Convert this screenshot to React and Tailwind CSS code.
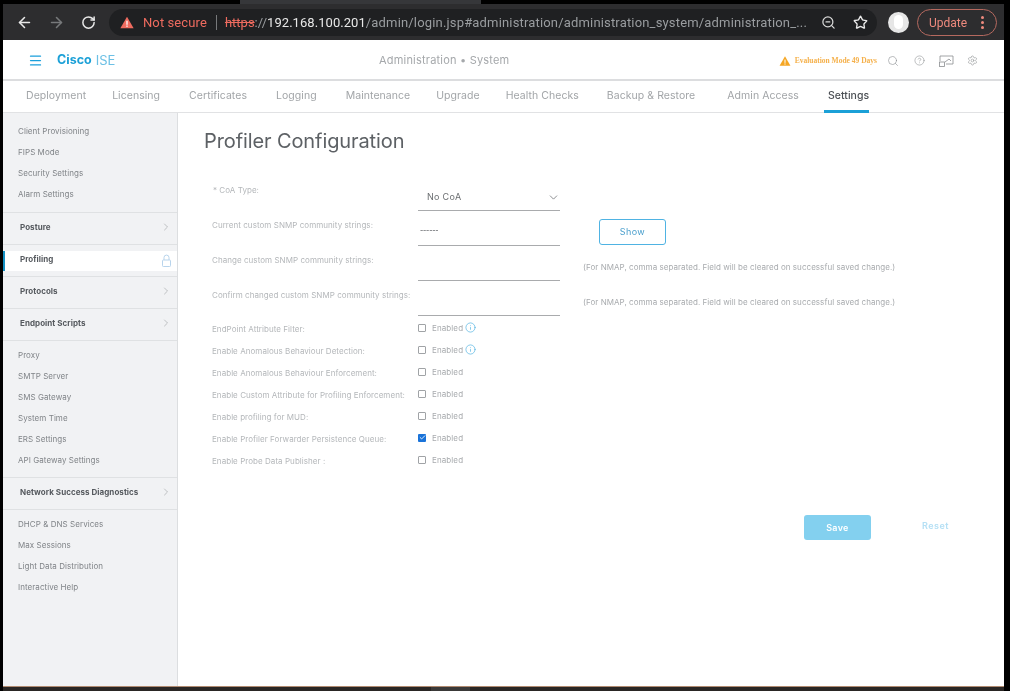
import React from 'react';
import { ArrowLeft, ArrowRight, RotateCw, Search, Star, ZoomOut, Menu, CircleHelp, Settings, ChevronRight, ChevronDown, Check, Info } from 'lucide-react';

const tabs = [
  { name: 'Deployment', gap: '' },
  { name: 'Licensing', gap: 'ml-[26px]' },
  { name: 'Certificates', gap: 'ml-[29px]' },
  { name: 'Logging', gap: 'ml-[29px]' },
  { name: 'Maintenance', gap: 'ml-[29px]' },
  { name: 'Upgrade', gap: 'ml-[26px]' },
  { name: 'Health Checks', gap: 'ml-[26px]' },
  { name: 'Backup & Restore', gap: 'ml-[28px]' },
  { name: 'Admin Access', gap: 'ml-[32px]' },
  { name: 'Settings', gap: 'ml-[25px] pl-[4px]' },
];

const checks = [
  { label: 'EndPoint Attribute Filter:', info: true },
  { label: 'Enable Anomalous Behaviour Detection:', info: true },
  { label: 'Enable Anomalous Behaviour Enforcement:' },
  { label: 'Enable Custom Attribute for Profiling Enforcement:' },
  { label: 'Enable profiling for MUD:' },
  { label: 'Enable Profiler Forwarder Persistence Queue:', checked: true },
  { label: 'Enable Probe Data Publisher :' },
];

const hint = '(For NMAP, comma separated. Field will be cleared on successful saved change.)';

const Warn = ({ className }) => (
  <svg viewBox="0 0 16 14" className={className}>
    <path d="M8 0.5 L15.6 13.5 H0.4 Z" fill="currentColor" />
    <rect x="7.2" y="5" width="1.6" height="4.6" fill="#fff" opacity="0.9" />
    <rect x="7.2" y="10.4" width="1.6" height="1.6" fill="#fff" opacity="0.9" />
  </svg>
);

const PadLock = () => (
  <svg viewBox="0 0 9 13" className="w-[9px] h-[13px] text-[#b8d4ec]" fill="none" stroke="currentColor" strokeWidth="1">
    <path d="M2 6 V3.6 a2.5 2.5 0 0 1 5 0 V6" />
    <rect x="0.5" y="6" width="8" height="6.5" rx="0.8" />
  </svg>
);

const Screens = () => (
  <svg viewBox="0 0 15 12" className="w-[15px] h-[12px] text-[#8a8d90]" fill="none" stroke="currentColor" strokeWidth="0.8">
    <path d="M1 6 V1 H14 V9 H7" />
    <rect x="0.5" y="7" width="5" height="4.5" />
    <path d="M6 7 L10 4 L12 6" />
  </svg>
);

const SideLink = ({ children }) => (
  <div className="h-[21px] pb-[2px] flex items-center pl-[15px] text-[8px] tracking-[0.05px] whitespace-nowrap text-[#808488]">{children}</div>
);

const SideGroup = ({ children, active }) => (
  <div className="h-[32px] border-b border-[#dfe1e3] flex items-center">
    <div className={`flex-1 h-[20px] flex items-center justify-between pl-[17px] text-[8px] font-bold tracking-[0.05px] whitespace-nowrap text-[#55595e] ${active ? 'bg-white pr-[6px]' : 'pr-[5px]'}`}>
      <span className="-mt-[4px]">{children}</span>
      {active ? <PadLock /> : <ChevronRight size={12} strokeWidth={1.2} className="-mt-[3px] text-[#9a9da0]" />}
    </div>
  </div>
);

const FormRow = ({ label, children, side }) => (
  <div className="h-[35px] grid grid-cols-[206px_142px_1fr]">
    <div className="pt-[8px] leading-[12px] text-[8px] tracking-[0.05px] whitespace-nowrap text-[#b4b7ba]">{label}</div>
    <div className="border-b border-[#a9abad] flex items-center justify-between px-[9px] pt-[8px] text-[#6a6d70]">{children}</div>
    <div className="text-[8px] tracking-[0.05px] whitespace-nowrap text-[#a8abae]">{side}</div>
  </div>
);

export default function App() {
  return (
    <div className="w-[1010px] h-[691px] overflow-hidden bg-black flex flex-col pl-[3px] pr-[6px] font-['Inter',sans-serif] blur-[0.4px]">
      {/* browser toolbar */}
      <div className="h-[4px] shrink-0 pl-[237px]">
        <div className="w-[241px] h-[4px] bg-[#36373a]" />
      </div>
      <div className="h-[36px] shrink-0 bg-[#2d2d2f] flex items-center pl-[13px] pr-[7px] font-['Roboto',sans-serif]">
        <ArrowLeft size={17} strokeWidth={2.2} className="shrink-0 text-[#e8e8e8]" />
        <ArrowRight size={17} strokeWidth={2.2} className="shrink-0 ml-[15px] text-[#77797b]" />
        <RotateCw size={15} strokeWidth={2.4} className="shrink-0 ml-[16px] text-[#e8e8e8]" />
        <div className="shrink-0 ml-[13px] w-[768px] h-[27px] rounded-full bg-[#1f2022] flex items-center pl-[11px] pr-[9px] text-[13px] whitespace-nowrap overflow-hidden">
          <Warn className="shrink-0 w-[14px] h-[13px] text-[#ee6b5f]" />
          <span className="ml-[9px] pt-[1px] text-[#ee6b5f] tracking-[0.1px]">Not secure</span>
          <span className="ml-[9px] w-px h-[15px] bg-[#77797b]" />
          <span className="ml-[8px] pt-[1px] text-[#ee6b5f] line-through">https</span>
          <span className="pt-[1px] text-[#9a9da0]">://</span>
          <span className="pt-[1px] text-[#e8e8e8] tracking-[0.05px]">192.168.100.201</span>
          <span className="pt-[1px] text-[#9a9da0] tracking-[0.17px]">/admin/login.jsp#administration/administration_system/administration_...</span>
          <div className="ml-auto flex items-center gap-[17px] shrink-0">
            <ZoomOut size={15} className="text-[#d8d8d8]" />
            <Star size={15} strokeWidth={2.2} className="text-[#e8e8e8]" />
          </div>
        </div>
        <div className="shrink-0 ml-[11px] w-[21px] h-[21px] rounded-full bg-[#e6e6e6] flex items-center justify-center">
          <div className="w-[9px] h-[14px] rounded-full bg-white" />
        </div>
        <div className="shrink-0 ml-[8px] w-[80px] h-[27px] rounded-full border border-[#b5695f] flex items-center justify-between pl-[11px] pr-[12px] text-[12px] text-[#ee8a7e]">
          <span className="pt-[1px]">Update</span>
          <span className="flex flex-col gap-[2px]">
            <i className="w-[3px] h-[3px] rounded-full bg-[#ee8a7e]" />
            <i className="w-[3px] h-[3px] rounded-full bg-[#ee8a7e]" />
            <i className="w-[3px] h-[3px] rounded-full bg-[#ee8a7e]" />
          </span>
        </div>
      </div>

      {/* cisco header */}
      <div className="h-[41px] shrink-0 bg-white border-b-2 border-[#dcdddf] flex items-center pt-[2px] pl-[25px] pr-[26px]">
        <div className="w-[351px] flex items-center">
          <Menu size={15} strokeWidth={2} className="text-[#1a9fdb]" />
          <span className="ml-[14px] text-[12.5px] font-bold text-[#1ba0d7]">Cisco</span>
          <span className="ml-[4px] text-[13px] text-[#6cc0e5]">ISE</span>
        </div>
        <div className="text-[11px] tracking-[0.2px] text-[#a5a8ab]">Administration • System</div>
        <div className="ml-auto flex items-center">
          <Warn className="w-[12px] h-[10px] text-[#f5a623]" />
          <span className="ml-[4px] text-[7.5px] font-bold font-['Liberation_Serif',serif] text-[#f5b04a]">Evaluation Mode 49 Days</span>
          <Search size={12} strokeWidth={1.2} className="ml-[10px] text-[#8a8d90]" />
          <CircleHelp size={11} strokeWidth={1.2} className="ml-[15px] text-[#8a8d90]" />
          <span className="ml-[14px]"><Screens /></span>
          <Settings size={11} strokeWidth={1.2} className="ml-[13px] text-[#8a8d90]" />
        </div>
      </div>

      {/* tabs */}
      <div className="h-[32px] shrink-0 bg-white border-b border-[#e1e2e4] flex pl-[23px] text-[10.5px] tracking-[0.05px]">
        {tabs.map((t) => (
          <div key={t.name} className={`flex items-center pt-[1px] border-b-[3px] h-[32px] ${t.gap} ${t.name === 'Settings' ? 'border-[#1ba0d7] text-[#4b4f54] font-medium' : 'border-transparent text-[#a2a5a8]'}`}>{t.name}</div>
        ))}
      </div>

      {/* body */}
      <div className="h-[573px] shrink-0 flex bg-white">
        <div className="w-[175px] shrink-0 bg-[#f1f2f4] border-r border-[#dcdee0] pt-[8px]">
          <div className="border-b border-[#dfe1e3] pb-[7px]">
            <SideLink>Client Provisioning</SideLink>
            <SideLink>FIPS Mode</SideLink>
            <SideLink>Security Settings</SideLink>
            <SideLink>Alarm Settings</SideLink>
          </div>
          <SideGroup>Posture</SideGroup>
          <div className="relative">
            <span className="absolute left-0 top-[6px] w-[2px] h-[20px] bg-[#1591c4]" />
            <SideGroup active>Profiling</SideGroup>
          </div>
          <SideGroup>Protocols</SideGroup>
          <SideGroup>Endpoint Scripts</SideGroup>
          <div className="border-b border-[#dfe1e3] pt-[4px] pb-[6px]">
            <SideLink>Proxy</SideLink>
            <SideLink>SMTP Server</SideLink>
            <SideLink>SMS Gateway</SideLink>
            <SideLink>System Time</SideLink>
            <SideLink>ERS Settings</SideLink>
            <SideLink>API Gateway Settings</SideLink>
          </div>
          <SideGroup>Network Success Diagnostics</SideGroup>
          <div className="pt-[4px]">
            <SideLink>DHCP &amp; DNS Services</SideLink>
            <SideLink>Max Sessions</SideLink>
            <SideLink>Light Data Distribution</SideLink>
            <SideLink>Interactive Help</SideLink>
          </div>
        </div>

        <div className="flex-1 min-w-0 pl-[26px] pr-[32px] pt-[14px]">
          <h1 className="text-[20px] leading-[28px] tracking-[-0.1px] text-[#5d6165]">Profiler Configuration</h1>
          <div className="mt-[21px] ml-[8px]">
            <FormRow label={<span className="pl-[1px]">* CoA Type:</span>}>
              <span className="text-[9px] tracking-[0.3px]">No CoA</span>
              <ChevronDown size={13} strokeWidth={1.4} className="-mr-[9px]" />
            </FormRow>
            <FormRow label="Current custom SNMP community strings:" side={
              <div className="ml-[39px] mt-[8px] w-[67px] h-[26px] rounded-[3px] border border-[#4fb3e3] flex items-center justify-center text-[9px] tracking-[0.4px] text-[#4a9fcd]">Show</div>
            }>
              <span className="-mt-[4px] -ml-[7px] text-[7px] font-semibold tracking-[-0.2px] leading-none">------</span>
            </FormRow>
            <FormRow label="Change custom SNMP community strings:" side={<div className="ml-[23px] mt-[15px] leading-[12px]">{hint}</div>} />
            <FormRow label="Confirm changed custom SNMP community strings:" side={<div className="ml-[23px] mt-[15px] leading-[12px]">{hint}</div>} />
          </div>

          <div className="mt-[1px] ml-[8px]">
            {checks.map((c) => (
              <div key={c.label} className="h-[22px] grid grid-cols-[206px_1fr] items-center">
                <div className="pt-[1px] text-[8px] tracking-[0.05px] whitespace-nowrap text-[#b4b7ba]">{c.label}</div>
                <div className="-mt-[1px] flex items-center text-[8px] tracking-[0.1px] text-[#a8abae]">
                  {c.checked ? (
                    <span className="w-[8px] h-[8px] rounded-[1px] bg-[#1a73d9] flex items-center justify-center">
                      <Check size={7} strokeWidth={3} className="text-white" />
                    </span>
                  ) : (
                    <span className="w-[8px] h-[8px] rounded-[1px] border border-[#a0a3a6]" />
                  )}
                  <span className="ml-[6px]">Enabled</span>
                  {c.info && <Info size={11} strokeWidth={1.4} className="ml-[2px] text-[#45ade0]" />}
                </div>
              </div>
            ))}
          </div>

          <div className="mt-[44px] flex items-center justify-end pr-[23px]">
            <div className="w-[67px] h-[25px] rounded-[3px] bg-[#83d0ef] flex items-center justify-center text-[9px] font-semibold tracking-[0.3px] text-white">Save</div>
            <div className="ml-[51px] -mt-[3px] text-[9px] font-semibold tracking-[0.5px] text-[#b5e0f5]">Reset</div>
          </div>
        </div>
      </div>

      <div className="flex-1 bg-[#2a2624] border-t border-[#b08a70] pl-[428px]">
        <div className="w-[39px] h-full bg-[#3a3938]" />
      </div>
    </div>
  );
}
